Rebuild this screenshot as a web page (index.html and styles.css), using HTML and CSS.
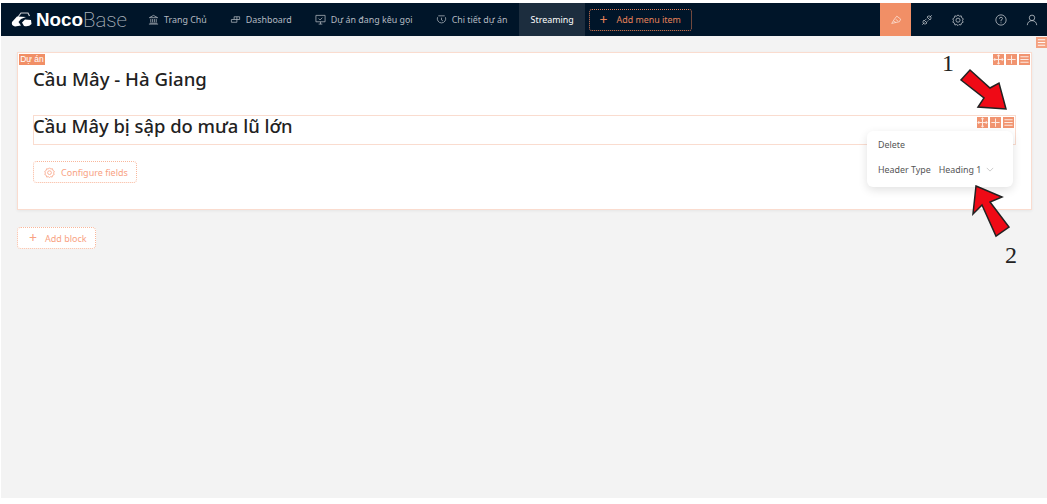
FILE: index.html
```html
<!DOCTYPE html>
<html lang="en">
<head>
    <meta charset="UTF-8">
    <meta name="viewport" content="width=device-width, initial-scale=1.0">
    <title>NocoBase</title>
    <link rel="stylesheet" href="styles.css">
</head>
<body>
    <div class="app">
        <header class="topbar">
            <div class="logo">
                <svg class="logo-mark" width="21" height="15" viewBox="0 0 21 15"><path d="M7 5 L10 1 L17 1 L18.5 4" fill="none" stroke="#c9ced3" stroke-width="1.2"/><path d="M1 10 L6 4.5 L15 5 L10 7 L7.5 10 L10 13.5 L4 14.5 Q0 13.5 1 10Z M14 7.5 L20 8 L20.5 12 Q18 15 13 14 L11 10.5Z" fill="#fff"/></svg>
                <span class="logo-bold">Noco</span><span class="logo-thin">Base</span>
            </div>
            <nav class="menu">
                <a class="menu-item">
                    <svg class="menu-icon" viewBox="0 0 12 12"><path d="M1.5 4 L6 1.5 L10.5 4 Z M2 10 H10 M1 11 H11 M3 5.5 V9 M5 5.5 V9 M7 5.5 V9 M9 5.5 V9"/></svg>
                    Trang Chủ
                </a>
                <a class="menu-item">
                    <svg class="menu-icon" viewBox="0 0 12 12"><path d="M4.5 3 H10.5 V6 H1.5 V9 H7.5 V3 M4.5 3 V6"/></svg>
                    Dashboard
                </a>
                <a class="menu-item">
                    <svg class="menu-icon" viewBox="0 0 12 12"><path d="M1 1.5 H11 V8.5 H1 Z M4 11 H8 M6 8.5 V11 M4 5 L5.5 6.5 L8 4"/></svg>
                    Dự án đang kêu gọi
                </a>
                <a class="menu-item">
                    <svg class="menu-icon" viewBox="0 0 12 12"><path d="M2.5 2 H9.5 M1.7 3.5 A4.6 4.6 0 1 0 10.3 3.5 M6 4 V6.5 L7.5 7.5"/></svg>
                    Chi tiết dự án
                </a>
                <a class="menu-item active">Streaming</a>
                <button class="add-menu"><span class="plus">+</span>Add menu item</button>
            </nav>
            <div class="tools">
                <span class="tool tool-on">
                    <svg class="tool-icon" viewBox="0 0 14 14"><path d="M2 11 L11 9 L12.5 6 L8 2.5 L5.5 5.5 Z M4 8 L7 10 M6.5 6 L9.5 8.5"/></svg>
                </span>
                <span class="tool">
                    <svg class="tool-icon" viewBox="0 0 14 14"><path d="M1.5 12.5 L4 10 M10 4 L12.5 1.5 M3.5 7 L7 10.5 L5.5 11.5 Q4 12 3 11 Q2 10 2.5 8.5 Z M7 3.5 L10.5 7 L11.5 5.5 Q12 4 11 3 Q10 2 8.5 2.5 Z M5 7 L6.5 5.5 M7 9 L8.5 7.5"/></svg>
                </span>
                <span class="tool">
                    <svg class="tool-icon" viewBox="0 0 14 14"><path d="M7 1 L8.5 2.6 L10.8 2.2 L11.3 4.4 L13.2 5.6 L12.2 7.6 L13 9.6 L11 10.6 L10.4 12.8 L8.2 12.3 L7 13.5 L5.5 12.3 L3.4 12.8 L2.9 10.6 L1 9.6 L1.8 7.6 L0.9 5.6 L2.8 4.4 L3.3 2.2 L5.5 2.6 Z"/><circle cx="7" cy="7.2" r="2.4"/></svg>
                </span>
                <span class="tool-divider"></span>
                <span class="tool">
                    <svg class="tool-icon" viewBox="0 0 14 14"><circle cx="7" cy="7" r="6"/><path d="M5.2 5.5 Q5.3 3.8 7 3.8 Q8.8 3.8 8.8 5.3 Q8.8 6.3 7 7.2 V8.5 M7 9.8 V10.8"/></svg>
                </span>
                <span class="tool">
                    <svg class="tool-icon" viewBox="0 0 14 14"><circle cx="7" cy="4.5" r="3.2"/><path d="M1.5 13 Q2 8 7 7.7 Q12 8 12.5 13"/></svg>
                </span>
            </div>
        </header>

        <main class="page">
            <section class="card">
                <span class="block-tag">Dự án</span>
                <h1 class="title">Cầu Mây - Hà Giang</h1>
                <div class="field">
                    <h2 class="field-title">Cầu Mây bị sập do mưa lũ lớn</h2>
                </div>
                <button class="dashed-btn configure">
                    <svg class="btn-icon" viewBox="0 0 14 14"><path d="M7 1 L8.5 2.6 L10.8 2.2 L11.3 4.4 L13.2 5.6 L12.2 7.6 L13 9.6 L11 10.6 L10.4 12.8 L8.2 12.3 L7 13.5 L5.5 12.3 L3.4 12.8 L2.9 10.6 L1 9.6 L1.8 7.6 L0.9 5.6 L2.8 4.4 L3.3 2.2 L5.5 2.6 Z"/><circle cx="7" cy="7.2" r="2.4"/></svg>
                    Configure fields
                </button>
            </section>
            <button class="dashed-btn add-block"><span class="plus">+</span>Add block</button>
        </main>
    </div>

    <!-- toolbars, settings popup and the red annotations sit on top of the page -->
    <span class="page-menu"><svg viewBox="0 0 12 12"><path d="M2 3 H10 M2 6 H10 M2 9 H10"/></svg></span>

    <div class="toolbar toolbar-card">
        <span class="tb-btn"><svg viewBox="0 0 12 12"><path d="M6 1 V11 M1 6 H11 M4.8 2.4 L6 1 L7.2 2.4 M4.8 9.6 L6 11 L7.2 9.6 M2.4 4.8 L1 6 L2.4 7.2 M9.6 4.8 L11 6 L9.6 7.2"/></svg></span>
        <span class="tb-btn"><svg viewBox="0 0 12 12"><path d="M6 1.5 V10.5 M1.5 6 H10.5"/></svg></span>
        <span class="tb-btn"><svg viewBox="0 0 12 12"><path d="M1.5 3 H10.5 M1.5 6 H10.5 M1.5 9 H10.5"/></svg></span>
    </div>
    <div class="toolbar toolbar-field">
        <span class="tb-btn"><svg viewBox="0 0 12 12"><path d="M6 1 V11 M1 6 H11 M4.8 2.4 L6 1 L7.2 2.4 M4.8 9.6 L6 11 L7.2 9.6 M2.4 4.8 L1 6 L2.4 7.2 M9.6 4.8 L11 6 L9.6 7.2"/></svg></span>
        <span class="tb-btn"><svg viewBox="0 0 12 12"><path d="M6 1.5 V10.5 M1.5 6 H10.5"/></svg></span>
        <span class="tb-btn"><svg viewBox="0 0 12 12"><path d="M1.5 3 H10.5 M1.5 6 H10.5 M1.5 9 H10.5"/></svg></span>
    </div>

    <div class="popup">
        <div class="popup-row">Delete</div>
        <div class="popup-row">
            <span>Header Type</span>
            <span class="popup-value">Heading 1</span>
            <svg class="chevron" viewBox="0 0 10 6"><path d="M1 1 L5 5 L9 1"/></svg>
        </div>
    </div>

    <span class="note note-1">1</span>
    <span class="note note-2">2</span>
    <svg class="arrow arrow-1" width="50" height="46" viewBox="0 0 50 46"><path d="M12 3 L32 21 L41 16 L48 42 L20 40 L26 31 L3 13 Z"/></svg>
    <svg class="arrow arrow-2" width="42" height="54" viewBox="0 0 42 54"><path d="M6 2 L32 13 L20 18 L39 43 L26 52 L12 21 L3 30 Z"/></svg>
</body>
</html>
```
FILE: styles.css
```css
* {
    box-sizing: border-box;
}

body {
    margin: 0;
    height: 504px;
    overflow: hidden;
    background-color: #fff;
    font-family: 'Noto Sans', 'Open Sans', Arial, sans-serif;
    color: #222;
}

.app {
    height: 498px;
    margin-left: 1px;
    padding-top: 3px;
    display: flex;
    flex-direction: column;
    background-color: #fff;
}

.topbar {
    height: 33px;
    flex: none;
    display: flex;
    align-items: stretch;
    background-color: #001529;
}

.logo {
    width: 135.5px;
    padding-left: 10px;
    display: flex;
    align-items: center;
    color: #fff;
    font-family: 'Liberation Sans', Arial, sans-serif;
    font-size: 18.8px;
}

.logo-mark {
    margin-right: 4px;
}

.logo-bold {
    font-weight: 700;
}

.logo-thin {
    font-family: Roboto, 'Liberation Sans', Arial, sans-serif;
    font-size: 20.5px;
    font-weight: 200;
    color: #aab2bb;
}

.menu {
    display: flex;
    align-items: stretch;
    font-size: 8.9px;
}

.menu-item {
    height: 100%;
    padding: 0 11.5px;
    display: flex;
    align-items: center;
    gap: 5px;
    color: #b4bac1;
    white-space: nowrap;
}

.menu-item.active {
    padding: 0 11.5px;
    background-color: #1c2d3e;
    color: #fff;
}

.menu-icon {
    width: 11px;
    height: 11px;
    fill: none;
    stroke: #b4bac1;
    stroke-width: 0.8;
}

.add-menu {
    align-self: center;
    width: 103px;
    height: 22px;
    margin-left: 3.5px;
    padding: 0;
    display: flex;
    align-items: center;
    justify-content: center;
    background: transparent;
    border: 1px dotted #e07c53;
    border-radius: 3px;
    color: #e8835a;
    font-family: inherit;
    font-size: 8.9px;
    white-space: nowrap;
}

.add-menu .plus {
    margin-right: 9px;
    font-size: 14px;
    line-height: 1;
}

.tools {
    margin-left: auto;
    display: flex;
    align-items: stretch;
}

.tool {
    width: 31px;
    display: flex;
    align-items: center;
    justify-content: center;
}

.tool-on {
    background-color: #f18f66;
}

.tool-divider {
    width: 12px;
}

.tool-icon {
    width: 12px;
    height: 12px;
    fill: none;
    stroke: #c3c8cd;
    stroke-width: 0.9;
}

.tool-on .tool-icon {
    stroke: #fbe3d8;
}

.page {
    flex: 1;
    padding: 16px 15px 0 16px;
    background-color: #f3f3f3;
}

.card {
    position: relative;
    height: 158px;
    padding: 14px 15px 0;
    background-color: #fff;
    border: 1px solid #fadccf;
    box-shadow: 0 1px 3px rgba(0, 0, 0, 0.06);
}

.block-tag {
    position: absolute;
    left: 1px;
    top: 1px;
    width: 26px;
    height: 11px;
    background-color: #f18f66;
    color: #fff;
    font-family: 'Liberation Sans', Arial, sans-serif;
    font-size: 8.5px;
    line-height: 11px;
    text-align: center;
}

.title {
    margin: 0;
    font-size: 18.6px;
    font-weight: 500;
    line-height: 24px;
    color: #222;
}

.field {
    height: 30px;
    margin-top: 24px;
    border: 1px solid #fadccf;
}

.field-title {
    margin: 0 0 0 -1px;
    font-size: 18.4px;
    font-weight: 500;
    line-height: 20px;
    color: #222;
}

.dashed-btn {
    display: flex;
    align-items: center;
    padding: 0;
    background-color: #fff;
    border: 1px dotted #f9b79b;
    border-radius: 4px;
    color: #f8a283;
    font-family: inherit;
    font-size: 9px;
    white-space: nowrap;
}

.configure {
    width: 104px;
    height: 22px;
    margin-top: 16px;
    padding-left: 10px;
    gap: 6px;
}

.btn-icon {
    width: 11px;
    height: 11px;
    fill: none;
    stroke: #f8a283;
    stroke-width: 1;
}

.add-block {
    width: 79px;
    height: 22px;
    margin-top: 17px;
    padding-left: 11px;
}

.add-block .plus {
    margin-right: 8px;
    font-size: 14px;
    line-height: 1;
}

.page-menu {
    position: absolute;
    left: 1036px;
    top: 37px;
    width: 11px;
    height: 11px;
    background-color: #f4a180;
}

.page-menu svg {
    display: block;
    fill: none;
    stroke: #fff;
    stroke-width: 1;
}

.toolbar {
    position: absolute;
    display: flex;
    gap: 2px;
}

.toolbar-card {
    left: 993px;
    top: 54px;
}

.toolbar-field {
    left: 977px;
    top: 117px;
}

.tb-btn {
    width: 11px;
    height: 11px;
    background-color: #f19470;
}

.tb-btn svg {
    display: block;
    width: 100%;
    height: 100%;
    fill: none;
    stroke: #fde9e0;
    stroke-width: 1.1;
}

.popup {
    position: absolute;
    left: 867px;
    top: 131px;
    width: 146px;
    height: 56px;
    padding: 0.5px 11px;
    background-color: #fff;
    border-radius: 6px;
    box-shadow: 0 3px 10px rgba(0, 0, 0, 0.12);
    font-size: 8.9px;
    color: #555;
}

.popup-row {
    height: 25px;
    display: flex;
    align-items: center;
    white-space: nowrap;
}

.popup-value {
    margin-left: 8px;
}

.chevron {
    width: 8px;
    height: 5px;
    margin-left: 5px;
    fill: none;
    stroke: #bfbfbf;
    stroke-width: 1;
}

.note {
    position: absolute;
    font-family: 'Liberation Serif', 'Times New Roman', serif;
    font-size: 24px;
    line-height: 24px;
    color: #222;
}

.note-1 {
    left: 942px;
    top: 51px;
}

.note-2 {
    left: 1005px;
    top: 243px;
}

.arrow {
    position: absolute;
}

.arrow path {
    fill: #ef0a16;
    stroke: #222;
    stroke-width: 1.5;
    stroke-linejoin: miter;
}

.arrow-1 {
    left: 958px;
    top: 67px;
}

.arrow-2 {
    left: 970px;
    top: 184px;
}
```
